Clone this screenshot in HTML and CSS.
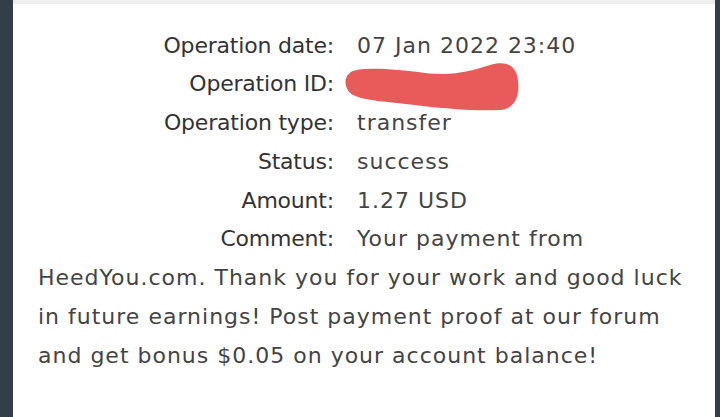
FILE: index.html
```
<!DOCTYPE html>
<html lang="en">
<head>
    <meta charset="UTF-8">
    <meta name="viewport" content="width=device-width, initial-scale=1.0">
    <title>Operation details</title>
    <link rel="stylesheet" href="styles.css">
</head>
<body>
    <!-- Dark page frame with the operation card -->
    <div class="frame">
        <div class="card">
            <div class="details">
                <div class="row"><span class="label">Operation date:</span><span class="value">07 Jan 2022 23:40</span></div>
                <div class="row"><span class="label">Operation ID:</span><span class="value redacted"><svg class="scribble" viewBox="0 0 175 52" width="175" height="52"><path d="M8,10 C20,6 50,8 80,12 C110,15 125,10 145,4 C160,-1 172,4 173,20 C175,38 168,48 155,49 C130,50 100,48 70,44 C45,41 20,40 8,34 C-2,28 -2,14 8,10 Z" fill="#e95b5b"/></svg></span></div>
                <div class="row"><span class="label">Operation type:</span><span class="value">transfer</span></div>
                <div class="row"><span class="label">Status:</span><span class="value">success</span></div>
                <div class="row"><span class="label">Amount:</span><span class="value">1.27 USD</span></div>
                <div class="row"><span class="label">Comment:</span>Your payment from HeedYou.com. Thank you for your work and good luck in future earnings! Post payment proof at our forum and get bonus $0.05 on your account balance!</div>
            </div>
        </div>
    </div>
</body>
</html>
```

FILE: styles.css
```
body {
    margin: 0;
    font-family: "DejaVu Sans", sans-serif;
}
.frame {
    display: flex;
    height: 417px;
    background-color: #333f48;
    overflow: hidden;
}
.card {
    flex: 1;
    margin-left: 13px;
    margin-right: 5px;
    background-color: #fff;
    border-top: 4px solid #eeeeee;
}
.details {
    padding: 22.5px 20px 0 25px;
    font-size: 22px;
    line-height: 38.75px;
    letter-spacing: 1px;
    color: #444;
}
.label {
    display: inline-block;
    width: 296px;
    margin-right: 23px;
    text-align: right;
    letter-spacing: -0.2px;
    color: #333;
}
.redacted {
    display: inline-block;
    height: 38px;
    vertical-align: top;
}
.scribble {
    display: block;
    margin: -4px 0 0 -12px;
}
```
